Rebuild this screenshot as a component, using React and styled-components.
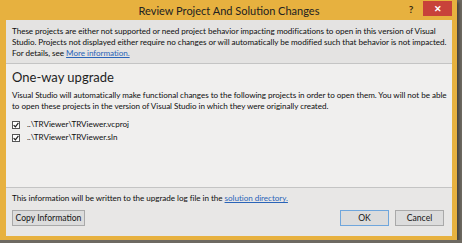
import React from 'react';
import styled, { createGlobalStyle } from 'styled-components';

const GlobalStyle = createGlobalStyle`
    html, body {
        margin: 0;
        padding: 0;
        background: #6e6a62;
    }
    body {
        font-family: Lato, "Open Sans", sans-serif;
        color: #0e0e0e;
    }
`;

const Window = styled.div`
    width: 457px;
    height: 240px;
    box-sizing: border-box;
    background: #e7b13f;
    padding: 0 5px 4px 6px;
    display: flex;
    flex-direction: column;
    box-shadow: 2px 2px 3px rgba(40, 36, 30, 0.6);
`;

const TitleBar = styled.div`
    position: relative;
    height: 20px;
    display: flex;
    align-items: center;
    justify-content: center;
    font-size: 11px;
    color: #222;
`;

const Controls = styled.div`
    position: absolute;
    right: 0;
    top: 1px;
    display: flex;
    align-items: center;
`;

const Help = styled.span`
    width: 24px;
    text-align: center;
    font-size: 10px;
    font-weight: 700;
    color: #3a2c10;
`;

const Close = styled.span`
    width: 29px;
    height: 15px;
    background: #c8423a;
    color: #fff;
    font-size: 9px;
    font-weight: 700;
    display: flex;
    align-items: center;
    justify-content: center;
`;

const Client = styled.div`
    flex: 1;
    background: #f0efee;
    display: flex;
    flex-direction: column;
    font-size: 8.1px;
    line-height: 11px;
    letter-spacing: -0.04px;
`;

const Line = styled.span`
    display: block;
    white-space: nowrap;
`;

const Banner = styled.div`
    background: #e4e3e2;
    border-bottom: 1px solid #c4c4c4;
    padding: 6px 6px 4px;
`;

const Body = styled.div`
    flex: 1;
    padding: 5px 6px 0;
`;

const Heading = styled.h2`
    margin: 0 0 5px;
    font-size: 13px;
    line-height: 16px;
    font-weight: 400;
    letter-spacing: 0;
    color: #1e1e1e;
`;

const Paragraph = styled.p`
    margin: 0 0 6px;
`;

const Link = styled.a`
    color: #2a64b8;
    text-decoration: underline;
`;

const CheckRow = styled.label`
    display: flex;
    align-items: center;
    height: 13px;
    gap: 7px;
`;

const Box = styled.span`
    width: 8px;
    height: 8px;
    box-sizing: border-box;
    border: 1px solid #555;
    background: #fff;
    display: flex;
    align-items: center;
    justify-content: center;
`;

const Footer = styled.div`
    border-top: 1px solid #c4c4c4;
    background: #e8e7e6;
    padding: 5px 8px 10px 6px;
    display: flex;
    flex-direction: column;
    gap: 6px;
`;

const ButtonRow = styled.div`
    display: flex;
    gap: 6px;
`;

const Button = styled.button`
    height: 16px;
    width: ${(p) => p.$w || 49}px;
    margin-left: ${(p) => (p.$push ? 'auto' : '0')};
    padding: 0;
    font-family: inherit;
    font-size: 8.6px;
    color: #151515;
    background: #dcdcdc;
    border: 1px solid ${(p) => (p.$primary ? '#6fa6dc' : '#a9a9a9')};
`;

const Check = () => (
    <Box>
        <svg width="6" height="6" viewBox="0 0 6 6">
            <path d="M0.6 3.1 L2.4 4.8 L5.4 0.9" fill="none" stroke="#222" strokeWidth="1.2" />
        </svg>
    </Box>
);

const App = () => {
    return (
        <>
            <GlobalStyle />
            <Window>
                <TitleBar>
                    Review Project And Solution Changes
                    <Controls>
                        <Help>?</Help>
                        <Close>✕</Close>
                    </Controls>
                </TitleBar>
                <Client>
                    <Banner>
                        <Line>These projects are either not supported or need project behavior impacting modifications to open in this version of Visual</Line>
                        <Line>Studio. Projects not displayed either require no changes or will automatically be modified such that behavior is not impacted.</Line>
                        <Line>For details, see <Link>More information.</Link></Line>
                    </Banner>
                    <Body>
                        <Heading>One-way upgrade</Heading>
                        <Paragraph>
                            <Line>Visual Studio will automatically make functional changes to the following projects in order to open them. You will not be able</Line>
                            <Line>to open these projects in the version of Visual Studio in which they were originally created.</Line>
                        </Paragraph>
                        <CheckRow><Check />..\TRViewer\TRViewer.vcproj</CheckRow>
                        <CheckRow><Check />..\TRViewer\TRViewer.sln</CheckRow>
                    </Body>
                    <Footer>
                        <Line>
                            This information will be written to the upgrade log file in the <Link>solution directory.</Link>
                        </Line>
                        <ButtonRow>
                            <Button $w={73}>Copy Information</Button>
                            <Button $push $primary>OK</Button>
                            <Button>Cancel</Button>
                        </ButtonRow>
                    </Footer>
                </Client>
            </Window>
        </>
    );
};

export default App;
